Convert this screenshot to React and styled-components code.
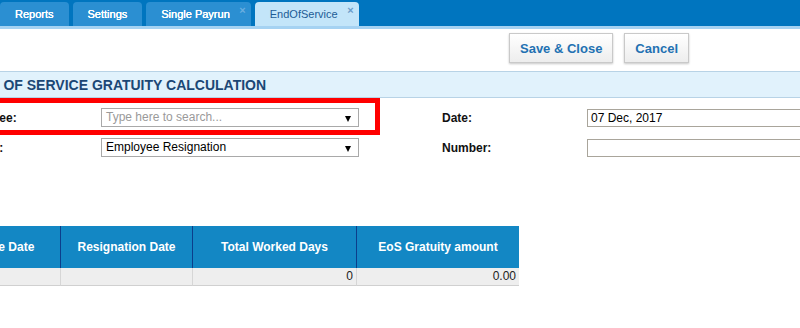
import React from "react";
import styled, { createGlobalStyle, css } from "styled-components";

const GlobalStyle = createGlobalStyle`
  html, body { margin: 0; padding: 0; background: #fff; overflow: hidden; }
  body { font-family: "Liberation Sans", Arial, sans-serif; }
  * { box-sizing: border-box; }
`;

const Page = styled.div`
  width: 800px;
  height: 328px;
  overflow: hidden;
  background: #fff;
`;

const TabBar = styled.div`
  display: flex;
  align-items: flex-end;
  gap: 4px;
  height: 29px;
  padding-top: 2px;
  background: #0075bf;
  border-bottom: 3px solid #a5d2f2;
`;

const Tab = styled.div`
  position: relative;
  height: 24px;
  line-height: 24px;
  padding: 0 15px;
  padding-right: ${(p) => (p.$closable ? "21px" : "15px")};
  border-radius: 4px 4px 0 0;
  font-size: 11px;
  white-space: nowrap;
  ${(p) =>
    p.$active
      ? css`
          background: #c3e5f9;
          color: #1d5c96;
        `
      : css`
          background: #2b8fd2;
          color: #fff;
          text-shadow: 0 0 0.6px #fff, 0 0 0.6px #fff;
        `}
`;

const Close = styled.span`
  position: absolute;
  top: 3px;
  right: 5px;
  line-height: 10px;
  font-size: 11px;
  font-weight: bold;
  text-shadow: none;
  color: ${(p) => (p.$active ? "#6b9cc9" : "#6aaee0")};
`;

const Toolbar = styled.div`
  display: flex;
  justify-content: flex-end;
  gap: 11px;
  height: 42px;
  padding: 4px 111px 0 0;
`;

const Button = styled.button`
  height: 30px;
  padding: 0 10px;
  font-family: "Liberation Sans", Arial, sans-serif;
  font-size: 13px;
  font-weight: bold;
  color: #2271b2;
  background: linear-gradient(#ffffff, #ededed);
  border: 1px solid #c9c9c9;
  box-shadow: 0 1px 2px rgba(0, 0, 0, 0.22);
  cursor: pointer;
`;

const Panel = styled.div`
  position: relative;
  overflow: hidden;
  height: 257px;
`;

const ScrollArea = styled.div`
  margin-left: -44px;
  width: 1000px;
`;

const SectionHeader = styled.div`
  height: 27px;
  display: flex;
  align-items: center;
  padding-left: 14px;
  background: #e1f2fc;
  border-top: 1px solid #b8d3e6;
  border-bottom: 1px solid #b8d3e6;
`;

const Title = styled.h2`
  margin: 0;
  font-size: 14px;
  font-weight: bold;
  color: #1b4775;
  white-space: nowrap;
`;

const Form = styled.div`
  display: grid;
  grid-template-columns: 145px 258px 83px 145px 258px;
  row-gap: 11px;
  align-items: center;
  padding-top: 10px;
`;

const Label = styled.label`
  font-size: 12px;
  font-weight: bold;
  color: #111;
  white-space: nowrap;
`;

const Spacer = styled.div``;

const Select = styled.div`
  position: relative;
  height: 19px;
  line-height: 17px;
  padding-left: 4px;
  border: 1px solid #a9a9a9;
  font-size: 12px;
  color: ${(p) => (p.$placeholder ? "#9a9a9a" : "#000")};
  background: #fff;
`;

const Arrow = styled.span`
  position: absolute;
  right: 7px;
  top: 7px;
  width: 0;
  height: 0;
  border-left: 3.5px solid transparent;
  border-right: 3.5px solid transparent;
  border-top: 6px solid #000;
`;

const TextBox = styled.div`
  height: 18px;
  line-height: 16px;
  padding-left: 3px;
  border: 1px solid #a9a59b;
  font-size: 12px;
  color: #000;
  background: #fff;
`;

const Table = styled.div`
  margin-top: 69px;
  display: grid;
  grid-template-columns: 105px 132px 164px 162px;
  width: 563px;
`;

const HeadCell = styled.div`
  height: 42px;
  display: flex;
  align-items: center;
  justify-content: center;
  background: #1387c4;
  color: #fff;
  font-size: 12px;
  font-weight: bold;
  white-space: nowrap;
  border-right: ${(p) => (p.$last ? "none" : "1px solid #0c3e8b")};
`;

const Cell = styled.div`
  height: 18px;
  line-height: 17px;
  padding-right: 3px;
  text-align: right;
  background: #eeeeee;
  font-size: 12px;
  color: #222;
  border-bottom: 1px solid #d0d0d0;
  border-right: ${(p) => (p.$last ? "none" : "1px solid #d6d6d6")};
`;

const Highlight = styled.div`
  position: absolute;
  top: 27px;
  left: -20px;
  width: 400px;
  height: 37px;
  border: 5px solid #ff0000;
  pointer-events: none;
`;

export default function App() {
  return (
    <>
      <GlobalStyle />
      <Page>
        <TabBar>
          <Tab>Reports</Tab>
          <Tab>Settings</Tab>
          <Tab $closable>
            Single Payrun<Close>×</Close>
          </Tab>
          <Tab $active $closable>
            EndOfService<Close $active>×</Close>
          </Tab>
        </TabBar>
        <Toolbar>
          <Button>Save &amp; Close</Button>
          <Button>Cancel</Button>
        </Toolbar>
        <Panel>
          <ScrollArea>
            <SectionHeader>
              <Title>END OF SERVICE GRATUITY CALCULATION</Title>
            </SectionHeader>
            <Form>
              <Label>Employee:</Label>
              <Select $placeholder>
                Type here to search...
                <Arrow />
              </Select>
              <Spacer />
              <Label>Date:</Label>
              <TextBox>07 Dec, 2017</TextBox>

              <Label>Reason:</Label>
              <Select>
                Employee Resignation
                <Arrow />
              </Select>
              <Spacer />
              <Label>Number:</Label>
              <TextBox />
            </Form>
            <Table>
              <HeadCell>Hire Date</HeadCell>
              <HeadCell>Resignation Date</HeadCell>
              <HeadCell>Total Worked Days</HeadCell>
              <HeadCell $last>EoS Gratuity amount</HeadCell>
              <Cell />
              <Cell />
              <Cell>0</Cell>
              <Cell $last>0.00</Cell>
            </Table>
          </ScrollArea>
          <Highlight />
        </Panel>
      </Page>
    </>
  );
}
